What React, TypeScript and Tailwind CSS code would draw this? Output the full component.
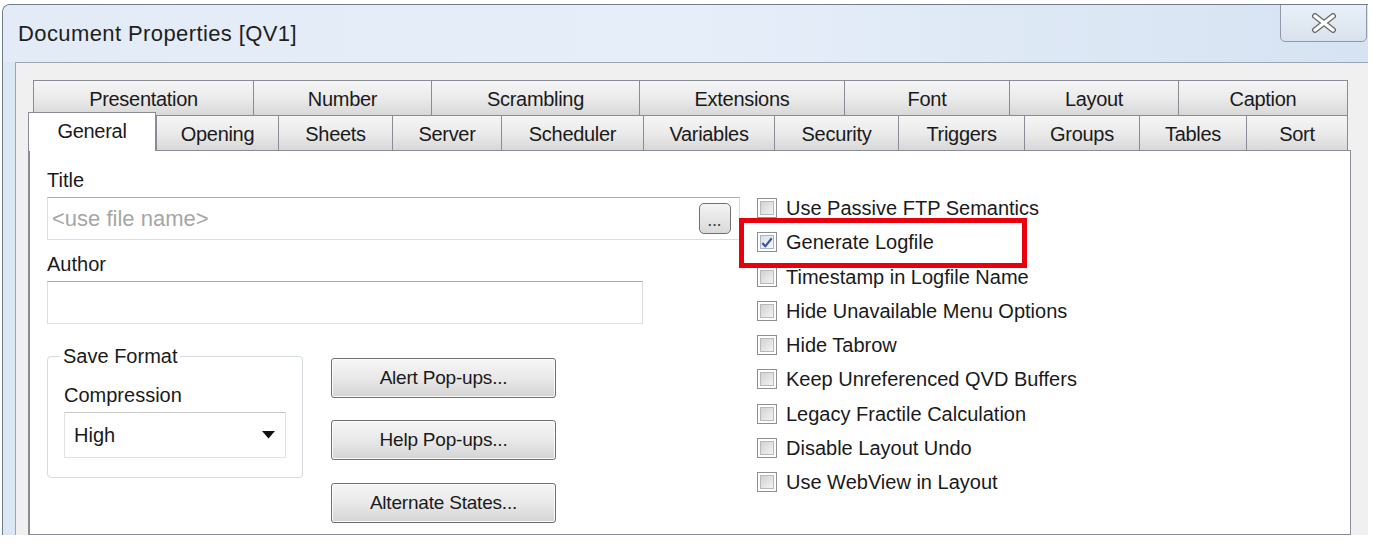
import React from 'react';

const topTabs = [
  { label: 'Presentation', w: 220 },
  { label: 'Number', w: 178 },
  { label: 'Scrambling', w: 208 },
  { label: 'Extensions', w: 205 },
  { label: 'Font', w: 165 },
  { label: 'Layout', w: 169 },
  { label: 'Caption', w: 170 },
];

const bottomTabs = [
  { label: 'General', w: 128, active: true },
  { label: 'Opening', w: 122 },
  { label: 'Sheets', w: 114 },
  { label: 'Server', w: 109 },
  { label: 'Scheduler', w: 142 },
  { label: 'Variables', w: 131 },
  { label: 'Security', w: 124 },
  { label: 'Triggers', w: 126 },
  { label: 'Groups', w: 115 },
  { label: 'Tables', w: 107 },
  { label: 'Sort', w: 102 },
];

const options = [
  { label: 'Use Passive FTP Semantics' },
  { label: 'Generate Logfile', checked: true },
  { label: 'Timestamp in Logfile Name' },
  { label: 'Hide Unavailable Menu Options' },
  { label: 'Hide Tabrow' },
  { label: 'Keep Unreferenced QVD Buffers' },
  { label: 'Legacy Fractile Calculation' },
  { label: 'Disable Layout Undo' },
  { label: 'Use WebView in Layout' },
];

function Tab({ label, w, active }: { label: string; w: number; active?: boolean }) {
  if (active) {
    return (
      <div
        className="relative z-10 -mb-px flex h-[39px] shrink-0 items-center justify-center border-x border-t border-[#898c95] bg-white pb-[3px] text-[20px] tracking-[-0.3px] text-[#1a1a1a]"
        style={{ width: w }}
      >
        {label}
      </div>
    );
  }
  return (
    <div
      className="flex h-[35px] shrink-0 items-center justify-center border-l border-t border-[#898c95] bg-gradient-to-b from-[#f5f5f5] via-[#ebebeb] to-[#d8d8d8] pt-[2px] text-[20px] tracking-[-0.3px] text-[#1a1a1a] last:border-r"
      style={{ width: w }}
    >
      {label}
    </div>
  );
}

function CheckBox({ checked }: { checked?: boolean }) {
  return (
    <div className="h-[20px] w-[20px] shrink-0 border border-[#8f8f8f] bg-white p-[2px]">
      <div
        className={
          checked
            ? 'flex h-full w-full items-center justify-center border border-[#a9b4c6] bg-gradient-to-br from-[#d9e0ec] to-[#f7f9fc]'
            : 'h-full w-full border border-[#b9b9b9] bg-gradient-to-br from-[#d2d2d2] to-[#f3f3f3]'
        }
      >
        {checked && (
          <svg width="14" height="13" viewBox="0 0 14 13">
            <path d="M1.5 7 L5 11 L12.5 1.5" fill="none" stroke="#3b5a9a" strokeWidth="2.6" strokeLinejoin="round" />
          </svg>
        )}
      </div>
    </div>
  );
}

function PushButton({ children }: { children: React.ReactNode }) {
  return (
    <div className="flex h-[40px] w-[225px] items-center justify-center rounded-[3px] border border-[#707070] bg-gradient-to-b from-[#f6f6f6] via-[#e9e9e9] to-[#d4d4d4] text-[19px] tracking-[-0.2px] text-[#1a1a1a] shadow-[inset_0_0_0_1px_#fbfbfb]">
      {children}
    </div>
  );
}

export default function App() {
  return (
    <div className="h-[546px] w-[1373px] overflow-hidden bg-white font-['Liberation_Sans',Arial,sans-serif]">
      {/* Window */}
      <div className="ml-[2px] mt-[4px] flex h-[531px] w-[1366px] flex-col overflow-hidden rounded-tl-[8px] border-l border-t border-[#6f7c8c] bg-[#dce7f4]">
        {/* Title bar */}
        <div className="flex h-[57px] shrink-0 items-start justify-between bg-gradient-to-r from-[#e2ebf6] via-[#e6eef9] to-[#d6e3f2]">
          <div className="pl-[15px] pt-[15px] text-[22px] leading-[28px] tracking-[0.4px] text-[#1e1e1e]">
            Document Properties [QV1]
          </div>
          <div className="-mt-px mr-px flex h-[38px] w-[87px] items-center justify-center rounded-b-[5px] border border-[#8e9aaa] bg-gradient-to-b from-[#eaf0f8] to-[#d8e2ee]">
            <svg width="26" height="20" viewBox="0 0 26 20">
              <path d="M4 3 L22 17 M22 3 L4 17" stroke="#6b6b6b" strokeWidth="6" strokeLinecap="round" fill="none" />
              <path d="M4 3 L22 17 M22 3 L4 17" stroke="#ffffff" strokeWidth="3.4" strokeLinecap="round" fill="none" />
            </svg>
          </div>
        </div>

        {/* Frame + client */}
        <div className="flex flex-1 pl-[12px]">
          <div className="flex flex-1 flex-col border-l border-t border-[#9ba6b4] bg-[#f0f0f0] pl-[12px] pt-[17px]">
            {/* Tab rows */}
            <div className="ml-[5px] flex">
              {topTabs.map((t) => (
                <Tab key={t.label} label={t.label} w={t.w} />
              ))}
            </div>
            <div className="-mt-[3px] flex h-[38px] items-end">
              {bottomTabs.map((t) => (
                <Tab key={t.label} label={t.label} w={t.w} active={t.active} />
              ))}
            </div>

            {/* Tab panel */}
            <div className="relative flex w-[1323px] flex-1 border border-l-2 border-[#898c95] bg-white pl-[17px] pt-[17px] text-[20px] text-[#1a1a1a]">
              {/* Left column */}
              <div className="flex w-[693px] shrink-0 flex-col">
                <div className="h-[24px] leading-[24px]">Title</div>
                <div className="mt-[5px] flex h-[43px] items-center justify-between border border-[#dadde2] border-t-[#a9adb2] pl-[4px] pr-[8px]">
                  <span className="text-[22px] text-[#a6a6a6]">&lt;use file name&gt;</span>
                  <div className="flex h-[31px] w-[32px] items-end justify-center rounded-[5px] border border-[#707070] bg-gradient-to-b from-[#f4f4f4] to-[#d9d9d9] pb-[6px] text-[13px] font-bold leading-[10px] tracking-[1px] text-[#444]">
                    ...
                  </div>
                </div>

                <div className="mt-[12px] h-[24px] leading-[24px]">Author</div>
                <div className="mt-[5px] h-[43px] w-[596px] border border-[#dadde2] border-t-[#a9adb2]" />

                <div className="flex items-start">
                  <fieldset className="mt-[20px] w-[256px] rounded-[4px] border border-[#d5dbe0] p-0 pb-[19px]">
                    <legend className="ml-[12px] px-[3px] leading-[24px]">Save Format</legend>
                    <div className="ml-[16px] mt-[15px] h-[24px] leading-[24px]">Compression</div>
                    <div className="ml-[16px] mt-[5px] flex h-[46px] w-[222px] items-center justify-between border border-[#e2e2e2] border-t-[#c8c8c8] pl-[9px] pr-[10px]">
                      <span>High</span>
                      <svg width="13" height="8" viewBox="0 0 13 8">
                        <path d="M0 0 H13 L6.5 7.5 Z" fill="#111" />
                      </svg>
                    </div>
                  </fieldset>

                  <div className="ml-[28px] mt-[34px] flex flex-col gap-[22px]">
                    <PushButton>Alert Pop-ups...</PushButton>
                    <PushButton>Help Pop-ups...</PushButton>
                    <div className="mt-px">
                      <PushButton>Alternate States...</PushButton>
                    </div>
                  </div>
                </div>
              </div>

              {/* Right column */}
              <div className="ml-[17px] flex flex-col pt-[23px]">
                {options.map((o) => (
                  <div key={o.label} className="flex h-[34.25px] items-center gap-[9px]">
                    <CheckBox checked={o.checked} />
                    <span>{o.label}</span>
                  </div>
                ))}
              </div>

              {/* Highlight */}
              <div className="pointer-events-none absolute left-[709px] top-[67px] h-[50px] w-[288px] border-[5px] border-[#e8000e]" />
            </div>
          </div>
        </div>
      </div>
    </div>
  );
}
